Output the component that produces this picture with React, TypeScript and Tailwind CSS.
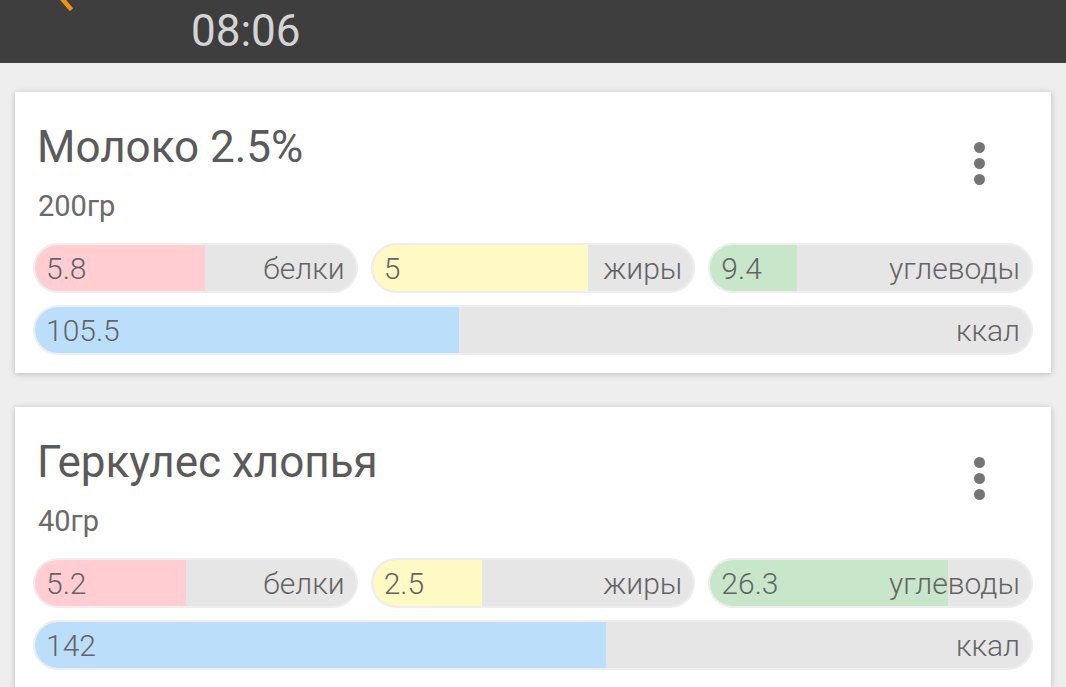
import React from "react";

type Macro = { value: string; label: string; pct: number; color: string };

type Food = {
  name: string;
  weight: string;
  macros: Macro[];
  kcal: { value: string; pct: number };
};

const foods: Food[] = [
  {
    name: "Молоко 2.5%",
    weight: "200гр",
    macros: [
      { value: "5.8", label: "белки", pct: 53, color: "#ffcdd2" },
      { value: "5", label: "жиры", pct: 67, color: "#fff9c4" },
      { value: "9.4", label: "углеводы", pct: 27, color: "#c8e6c9" },
    ],
    kcal: { value: "105.5", pct: 42.6 },
  },
  {
    name: "Геркулес хлопья",
    weight: "40гр",
    macros: [
      { value: "5.2", label: "белки", pct: 47, color: "#ffcdd2" },
      { value: "2.5", label: "жиры", pct: 34, color: "#fff9c4" },
      { value: "26.3", label: "углеводы", pct: 74, color: "#c8e6c9" },
    ],
    kcal: { value: "142", pct: 57.3 },
  },
];

function Bar({ value, label, pct, color }: Macro) {
  return (
    <div className="relative flex h-[50px] flex-1 items-center justify-between overflow-hidden rounded-full border-2 border-[#eeeeee] bg-[#e6e6e6] px-[11px] text-[30px] font-light text-[#646464]">
      <div
        className="absolute inset-y-0 left-0 rounded-l-full"
        style={{ width: `${pct}%`, backgroundColor: color }}
      />
      <span className="relative">{value}</span>
      <span className="relative">{label}</span>
    </div>
  );
}

function FoodCard({ food }: { food: Food }) {
  return (
    <div className="mx-[15px] h-[281px] shrink-0 bg-white px-[18px] pt-[29px] pb-[18px] shadow-[0_1px_6px_rgba(0,0,0,0.22)]">
      <div className="flex justify-between">
        <div className="pl-[4px]">
          <div className="text-[44px] leading-[52px] text-[#5a5a5a]">{food.name}</div>
          <div className="mt-[16px] pl-[1px] text-[29px] leading-[34px] text-[#6a6a6a]">{food.weight}</div>
        </div>
        <div className="mt-[21px] mr-[48px] flex flex-col gap-[5px]">
          <span className="h-[11px] w-[11px] rounded-full bg-[#757575]" />
          <span className="h-[11px] w-[11px] rounded-full bg-[#757575]" />
          <span className="h-[11px] w-[11px] rounded-full bg-[#757575]" />
        </div>
      </div>
      <div className="mt-[20px] flex flex-col gap-[12px]">
        <div className="flex gap-[13px]">
          {food.macros.map((m) => (
            <Bar key={m.label} {...m} />
          ))}
        </div>
        <div className="flex">
          <Bar value={food.kcal.value} label="ккал" pct={food.kcal.pct} color="#bbdefb" />
        </div>
      </div>
    </div>
  );
}

export default function App() {
  return (
    <div
      className="flex h-[687px] w-[1066px] flex-col overflow-hidden bg-[#eeeeee]"
      style={{ fontFamily: "Roboto, 'Noto Sans', sans-serif" }}
    >
      <div className="relative flex h-[63px] shrink-0 items-center bg-[#3e3e3e] pl-[191px]">
        <svg className="absolute left-[56px] top-0" width="22" height="12" viewBox="0 0 22 12">
          <path d="M2 -6 L14 8" stroke="#f0930e" strokeWidth="4.5" strokeLinecap="square" />
        </svg>
        <span className="pb-[2px] text-[44px] leading-none text-[#d4d4d4]">08:06</span>
      </div>
      <div className="mt-[29px] flex flex-col gap-[34px]">
        {foods.map((f) => (
          <FoodCard key={f.name} food={f} />
        ))}
      </div>
    </div>
  );
}
